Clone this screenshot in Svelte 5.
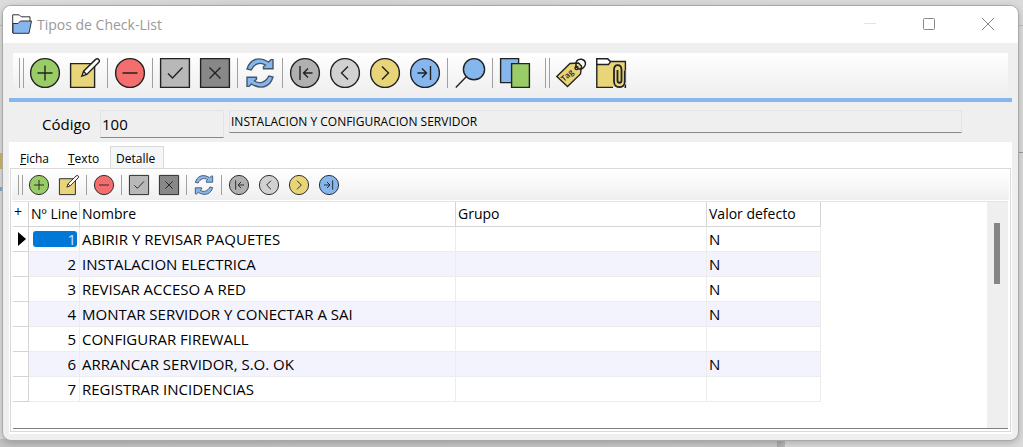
<script>
	let code = '100';
	let description = 'INSTALACION Y CONFIGURACION SERVIDOR';
	let activeTab = 'Detalle';
	let selected = 1;

	const tabs = ['Ficha', 'Texto', 'Detalle'];

	const mainTools = [
		'grip', 'add', 'edit', 'sep', 'remove', 'sep', 'accept', 'cancel', 'sep', 'refresh', 'sep',
		'first', 'prev', 'next', 'last', 'sep', 'search', 'sep', 'copy', 'gap', 'grip', 'tag', 'attach'
	];

	const gridTools = [
		'grip', 'add', 'edit', 'sep', 'remove', 'sep', 'accept', 'cancel', 'sep', 'refresh', 'sep',
		'first', 'prev', 'next', 'last'
	];

	const labels = {
		add: 'Añadir',
		edit: 'Editar',
		remove: 'Borrar',
		accept: 'Aceptar',
		cancel: 'Cancelar',
		refresh: 'Refrescar',
		first: 'Primero',
		prev: 'Anterior',
		next: 'Siguiente',
		last: 'Último',
		search: 'Buscar',
		copy: 'Copiar',
		tag: 'Etiquetas',
		attach: 'Adjuntos'
	};

	const rows = [
		{ line: 1, name: 'ABIRIR Y REVISAR PAQUETES', group: '', value: 'N' },
		{ line: 2, name: 'INSTALACION ELECTRICA', group: '', value: 'N' },
		{ line: 3, name: 'REVISAR ACCESO A RED', group: '', value: 'N' },
		{ line: 4, name: 'MONTAR SERVIDOR Y CONECTAR A SAI', group: '', value: 'N' },
		{ line: 5, name: 'CONFIGURAR FIREWALL', group: '', value: '' },
		{ line: 6, name: 'ARRANCAR SERVIDOR, S.O. OK', group: '', value: 'N' },
		{ line: 7, name: 'REGISTRAR INCIDENCIAS', group: '', value: '' }
	];
</script>

{#snippet icon(name)}
	<svg class="icon" viewBox="0 0 30 30" aria-hidden="true">
		{#if name === 'add'}
			<circle cx="15" cy="15" r="14.4" fill="#99cc66" />
			<path d="M7.5 15h15M15 7.5v15" />
		{:else if name === 'edit'}
			<path d="M.6 5.6h24v23.8H.6z" fill="#e8d479" />
			<path d="M11.8 18.2 13.6 13.2 25.6 1.4Q27.4 0 28.8 1.4T28.6 4.4L16.8 16.4Z" fill="#fff" />
			<path d="m13.6 13.4 3 3" />
		{:else if name === 'remove'}
			<circle cx="15" cy="15" r="14.4" fill="#f56e6e" />
			<path d="M7.5 15h15" />
		{:else if name === 'accept'}
			<path d="M.6.6h28.8v28.8H.6z" fill="#b8b8b8" />
			<path d="m8 15.5 4.5 4.5L22.5 9.5" />
		{:else if name === 'cancel'}
			<path d="M.6.6h28.8v28.8H.6z" fill="#888" />
			<path d="m9.5 9.5 11 11m0-11-11 11" />
		{:else if name === 'refresh'}
			<g fill="#85b7ee" stroke="#46566a">
				<path d="M2 11C5 1 14-2 23.5 4L26 1.6H28V10.8H18.5V8.8L20.5 7C15 3.5 9 6 6.2 12Z" />
				<path d="M28 19C25 29 16 32 6.5 26L4 28.4H2V19.2H11.5V21.2L9.5 23C15 26.5 21 24 23.8 18Z" />
			</g>
		{:else if name === 'first'}
			<circle cx="15" cy="15" r="14.4" fill="#b0b0b0" />
			<path d="M10 8v14M22.5 15h-9M18 10.5 13.5 15l4.5 4.5" />
		{:else if name === 'prev'}
			<circle cx="15" cy="15" r="14.4" fill="#d1d1d1" />
			<path d="m18 8.5-6.5 6.5 6.5 6.5" />
		{:else if name === 'next'}
			<circle cx="15" cy="15" r="14.4" fill="#e8d479" />
			<path d="m12 8.5 6.5 6.5-6.5 6.5" />
		{:else if name === 'last'}
			<circle cx="15" cy="15" r="14.4" fill="#85b7ee" />
			<path d="M20.5 8v14M7.5 15h9M12 10.5l4.5 4.5-4.5 4.5" />
		{:else if name === 'search'}
			<circle cx="19" cy="11.2" r="10.6" fill="#85b7ee" />
			<path d="M11.5 18.5.8 29.4" />
		{:else if name === 'copy'}
			<path d="M.6.6h18v24H.6z" fill="#85b7ee" />
			<path d="M11.6 5.6h17.8v23.8H11.6z" fill="#99cc66" />
		{:else if name === 'tag'}
			<path d="M.8 18.5 14 5.5 22.5 5 25.5 8 24.5 16 11.5 28.5Z" fill="#e8d479" />
			<circle cx="20.5" cy="10" r="1.5" fill="#fff" />
			<path d="M20.5 10C18.5 3 22 .8 25.5 1.2 30 2 30.5 6.5 28 9 26.5 11 24 11.5 22 10.5" stroke-width="1.5" />
			<text x="8" y="24" transform="rotate(-42 8 24)">Tag</text>
		{:else if name === 'attach'}
			<path d="M.8.8H11.5L14.5 3.5H29.4V29.4H.8z" fill="#e8d479" />
			<path d="M.8.8H11.5L14.5 3.8 12.5 6.5H.8z" fill="#fff" />
			<path d="M29.4 12.5v14M17 29.4h11.5" stroke="#f5f5f5" stroke-width="1.6" />
			<path d="M21.5 12V22.5C21.5 25.5 25.5 25.5 25.5 22.5V12C25.5 5.5 18 5.5 18 12V23.5C18 31 28.8 31 28.8 23.5V12.5" stroke-width="1.8" />
		{/if}
	</svg>
{/snippet}

{#snippet toolbar(items)}
	{#each items as item}
		{#if item === 'grip'}
			<span class="grip"></span>
		{:else if item === 'sep'}
			<span class="sep"></span>
		{:else if item === 'gap'}
			<span class="gap"></span>
		{:else}
			<button type="button" class="tool" title={labels[item]} aria-label={labels[item]}>
				{@render icon(item)}
			</button>
		{/if}
	{/each}
{/snippet}

<main class="window">
	<header class="titlebar">
		<svg class="app-icon" viewBox="0 0 20 20" aria-hidden="true">
			<path d="M.7 19V.8h6.5l2 2H18v5" fill="#fff" stroke="#333" />
			<path d="M1 19.3V9.5h5L8.5 7H19.5L17 19.3z" fill="#85b7ee" stroke="#333" />
		</svg>
		<h1>Tipos de Check-List</h1>
		<button class="win-btn dim" aria-label="Minimizar">
			<svg viewBox="0 0 12 12"><path d="M0 5.5h12" /></svg>
		</button>
		<button class="win-btn" aria-label="Maximizar">
			<svg viewBox="0 0 12 12"><rect x=".5" y=".5" width="11" height="11" rx="1" /></svg>
		</button>
		<button class="win-btn" aria-label="Cerrar">
			<svg viewBox="0 0 12 12"><path d="m0 0 12 12M12 0 0 12" /></svg>
		</button>
	</header>

	<div class="toolbar main-toolbar">
		{@render toolbar(mainTools)}
	</div>
	<div class="rule"></div>

	<form class="record">
		<label for="code">Código</label>
		<input id="code" class="code" bind:value={code} />
		<input class="description" aria-label="Descripción" bind:value={description} />
	</form>

	<section class="pages">
		<div class="tabs" role="tablist">
			{#each tabs as tab}
				<button class="tab" class:active={tab === activeTab} role="tab" aria-selected={tab === activeTab} on:click={() => (activeTab = tab)}>
					{#if tab === 'Detalle'}{tab}{:else}<u>{tab[0]}</u>{tab.slice(1)}{/if}
				</button>
			{/each}
		</div>

		<div class="panel">
			<div class="toolbar grid-toolbar">
				{@render toolbar(gridTools)}
			</div>
			<div class="grid">
				<table>
					<colgroup>
						<col class="col-mark" />
						<col class="col-line" />
						<col class="col-name" />
						<col class="col-group" />
						<col class="col-value" />
					</colgroup>
					<thead>
						<tr>
							<th class="mark">+</th>
							<th>Nº Line</th>
							<th>Nombre</th>
							<th>Grupo</th>
							<th>Valor defecto</th>
						</tr>
					</thead>
					<tbody>
						{#each rows as row}
							<tr on:click={() => (selected = row.line)}>
								<td class="mark">
									{#if row.line === selected}
										<svg class="pointer" viewBox="0 0 8 14"><path d="M0 0 8 7 0 14z" /></svg>
									{/if}
								</td>
								<td class="line"><span class:current={row.line === selected}>{row.line}</span></td>
								<td>{row.name}</td>
								<td>{row.group}</td>
								<td>{row.value}</td>
							</tr>
						{/each}
					</tbody>
				</table>
				<div class="scrollbar"><div class="thumb"></div></div>
			</div>
		</div>
	</section>
</main>

<style>
	:global(body) {
		background: #d9d9d9;
		font-family: 'Open Sans', 'Segoe UI', sans-serif;
		font-size: 14px;
		color: #000;
	}

	/* desktop behind the window: slivers of the application underneath */
	:global(#app) {
		display: flex;
		min-height: 100vh;
		box-sizing: border-box;
		padding: 5px 4px 6px 2px;
		background:
			linear-gradient(#cdb95f, #cdb95f) 0 153px / 3px 16px no-repeat,
			linear-gradient(#7aa9df, #7aa9df) 0 187px / 3px 4px no-repeat,
			linear-gradient(#999, #999) 100% 152px / 5px 1px no-repeat,
			linear-gradient(#bbb, #bbb) 0 25px / 100% 1px no-repeat,
			linear-gradient(90deg, #a9a9a9, #b8b8b8) 777px 100% / 8px 8px no-repeat,
			linear-gradient(90deg, #bfc1c3, #c6c7c8) 0 100% / 777px 8px no-repeat,
			linear-gradient(90deg, #dcdcdc, #d3d3d3 30%, #dadada);
	}

	* {
		box-sizing: border-box;
	}

	button,
	input {
		font: inherit;
		color: inherit;
		border: none;
		border-radius: 0;
		background: none;
		margin: 0;
		padding: 0;
	}

	.window {
		flex: 1;
		display: flex;
		flex-direction: column;
		background: #efefef;
		border: 1px solid #a9a9a9;
		border-radius: 9px;
		overflow: hidden;
		box-shadow: 0 2px 6px rgba(0, 0, 0, 0.2);
	}

	.titlebar {
		display: flex;
		align-items: center;
		height: 37px;
		padding: 0 1px 1px 9px;
		background: #fff;
	}

	.app-icon {
		width: 20px;
		height: 20px;
		margin-right: 5px;
	}

	h1 {
		flex: 1;
		margin: 0;
		font-size: 14px;
		font-weight: 400;
		color: #999;
	}

	.win-btn {
		display: flex;
		justify-content: center;
		width: 59px;
	}

	.win-btn svg {
		width: 12px;
		height: 12px;
		fill: none;
		stroke: #888;
		overflow: visible;
	}

	.dim svg {
		stroke: #e4e4e4;
	}

	.toolbar {
		display: flex;
		align-items: center;
		background: linear-gradient(#fff, #efefef);
	}

	.main-toolbar {
		--size: 30px;
		height: 40px;
		margin: 10px 10px 5px;
		padding-left: 6px;
	}

	.grid-toolbar {
		--size: 20px;
		height: 30px;
		margin-bottom: 1px;
		padding-left: 6px;
	}

	.tool {
		display: flex;
		padding: 0 5px;
	}

	.icon {
		width: var(--size);
		height: var(--size);
		overflow: visible;
		fill: none;
		stroke: #222;
		stroke-width: 1.4;
	}

	.icon text {
		font-family: 'Open Sans', sans-serif;
		font-size: 8px;
		font-weight: 600;
		text-rendering: geometricPrecision;
		fill: #222;
		stroke: none;
	}

	.grip {
		width: 5px;
		height: var(--size);
		margin-right: 1px;
		border: 1px solid #a0a0a0;
		border-width: 0 1px;
	}

	.gap {
		width: 10px;
	}

	.sep {
		width: 1px;
		height: var(--size);
		margin: 0 2px;
		background: #a0a0a0;
	}

	.rule {
		height: 4px;
		margin: 0 6px;
		background: #85b7ee;
	}

	.record {
		display: flex;
		align-items: flex-start;
		height: 40px;
		padding: 8px 56px 0 39px;
	}

	.record label {
		width: 58px;
		line-height: 28px;
		font-size: 15px;
	}

	.record input {
		border: 1px solid #e3e3e3;
		border-bottom-color: #888;
	}

	.code {
		width: 124px;
		height: 28px;
		padding: 0 1px;
		font-size: 15px;
	}

	.description {
		flex: 1;
		min-width: 0;
		height: 23px;
		margin-left: 5px;
		padding: 0 1px 1px;
		font-size: 12px;
	}

	.pages {
		flex: 1;
		display: flex;
		flex-direction: column;
		margin: 0 6px 6px;
		background: #fff;
	}

	.tabs {
		display: flex;
		height: 26px;
		padding: 4px 0 0 5px;
	}

	.tab {
		width: 48px;
		padding: 2px 6px 0;
		font-size: 12px;
		text-align: left;
	}

	.active {
		width: 54px;
		padding: 2px 5px 0;
		border: 1px solid #d9d9d9;
		border-bottom: none;
		background: #f4f6f8;
	}

	.panel {
		flex: 1;
		display: flex;
		flex-direction: column;
		margin: 0 1px 2px;
		padding: 1px;
		border: 1px solid #d9d9d9;
	}

	.grid {
		flex: 1;
		display: flex;
		justify-content: space-between;
		margin: 0 1px 1px;
		border-top: 1px solid #e3e3e3;
		border-bottom: 1px solid #808080;
	}

	table {
		width: 808px;
		align-self: flex-start;
		table-layout: fixed;
		border-collapse: separate;
		border-spacing: 0;
		font-size: 15px;
	}

	.col-mark {
		width: 16px;
	}

	.col-line {
		width: 51px;
	}

	.col-name {
		width: 376px;
	}

	.col-group {
		width: 251px;
	}

	th,
	td {
		height: 25px;
		padding: 0 2px;
		border-right: 1px solid #ececec;
		border-bottom: 1px solid #ececec;
		font-weight: 400;
		line-height: 24px;
		text-align: left;
		white-space: nowrap;
		overflow: hidden;
	}

	th {
		font-size: 14px;
	}

	th,
	.mark {
		border-color: #d5d5d5;
	}

	th.mark {
		padding: 0 1px;
		line-height: 20px;
		vertical-align: top;
	}

	tbody tr:nth-child(even) td:not(.mark) {
		background: #f3f3fd;
	}

	.line {
		padding-left: 4px;
	}

	.line span {
		display: block;
		height: 16px;
		padding-right: 1px;
		border-radius: 3px;
		line-height: 16px;
		text-align: right;
	}

	.line .current {
		background: #0078d7;
		color: #cfe4f7;
	}

	.pointer {
		display: block;
		width: 8px;
		height: 14px;
		margin-left: 3px;
	}

	.scrollbar {
		width: 21px;
		padding: 21px 7px;
		background: #efefef;
	}

	.thumb {
		width: 6px;
		height: 61px;
		background: #868686;
	}
</style>
